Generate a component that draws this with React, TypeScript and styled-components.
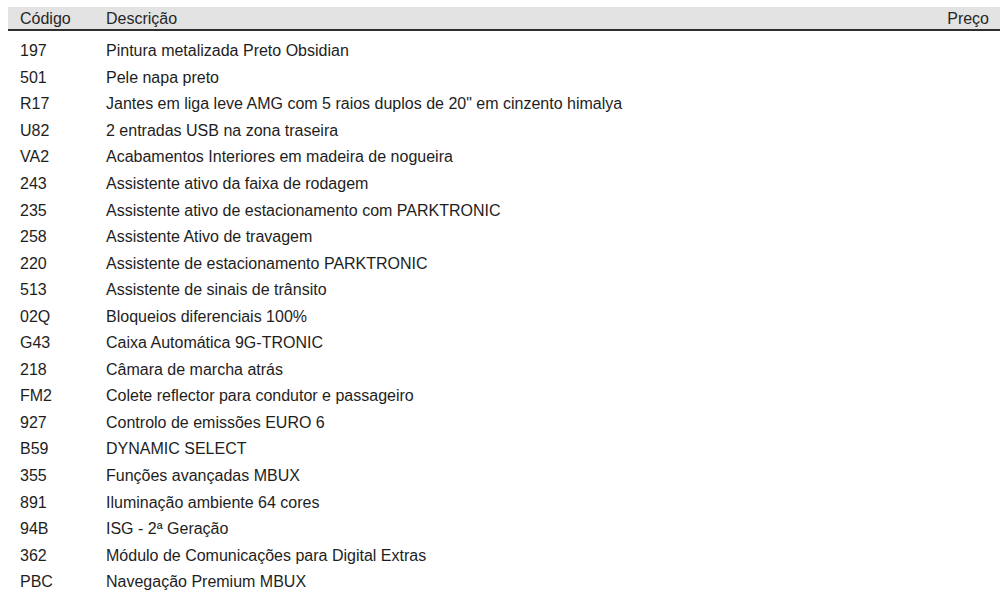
import React from 'react';
import styled, { createGlobalStyle } from 'styled-components';

const GlobalStyle = createGlobalStyle`
  html, body {
    margin: 0;
    padding: 0;
    background: #ffffff;
  }
  body {
    font-family: "Liberation Sans Narrow", "Liberation Sans", "DejaVu Sans Condensed", sans-serif;
    color: #1e1e1e;
  }
`;

const Sheet = styled.div`
  width: 1000px;
  height: 601px;
  overflow: hidden;
  padding: 7px 0 0 8px;
  box-sizing: border-box;
`;

const HeaderRow = styled.div`
  display: flex;
  align-items: center;
  height: 24px;
  padding-top: 2px;
  box-sizing: border-box;
  background: #e3e3e3;
  border-bottom: 2px solid #2e2e2e;
  font-size: 16px;
  color: #262626;
`;

const Row = styled.div`
  display: flex;
  align-items: center;
  height: 26.55px;
  font-size: 16px;
`;

const Body = styled.div`
  padding-top: 7px;
`;

const CodeCell = styled.div`
  width: 86px;
  padding-left: 12px;
  flex-shrink: 0;
`;

const DescCell = styled.div`
  flex: 1;
  white-space: nowrap;
`;

const PriceCell = styled.div`
  width: 80px;
  padding-right: 11px;
  text-align: right;
`;

const items: [string, string][] = [
  ['197', 'Pintura metalizada Preto Obsidian'],
  ['501', 'Pele napa preto'],
  ['R17', 'Jantes em liga leve AMG com 5 raios duplos de 20" em cinzento himalya'],
  ['U82', '2 entradas USB na zona traseira'],
  ['VA2', 'Acabamentos Interiores em madeira de nogueira'],
  ['243', 'Assistente ativo da faixa de rodagem'],
  ['235', 'Assistente ativo de estacionamento com PARKTRONIC'],
  ['258', 'Assistente Ativo de travagem'],
  ['220', 'Assistente de estacionamento PARKTRONIC'],
  ['513', 'Assistente de sinais de trânsito'],
  ['02Q', 'Bloqueios diferenciais 100%'],
  ['G43', 'Caixa Automática 9G-TRONIC'],
  ['218', 'Câmara de marcha atrás'],
  ['FM2', 'Colete reflector para condutor e passageiro'],
  ['927', 'Controlo de emissões EURO 6'],
  ['B59', 'DYNAMIC SELECT'],
  ['355', 'Funções avançadas MBUX'],
  ['891', 'Iluminação ambiente 64 cores'],
  ['94B', 'ISG - 2ª Geração'],
  ['362', 'Módulo de Comunicações para Digital Extras'],
  ['PBC', 'Navegação Premium MBUX'],
];

export default function App() {
  return (
    <>
      <GlobalStyle />
      <Sheet>
        <HeaderRow>
          <CodeCell>Código</CodeCell>
          <DescCell>Descrição</DescCell>
          <PriceCell>Preço</PriceCell>
        </HeaderRow>
        <Body>
          {items.map(([code, desc]) => (
            <Row key={code}>
              <CodeCell>{code}</CodeCell>
              <DescCell>{desc}</DescCell>
              <PriceCell />
            </Row>
          ))}
        </Body>
      </Sheet>
    </>
  );
}
